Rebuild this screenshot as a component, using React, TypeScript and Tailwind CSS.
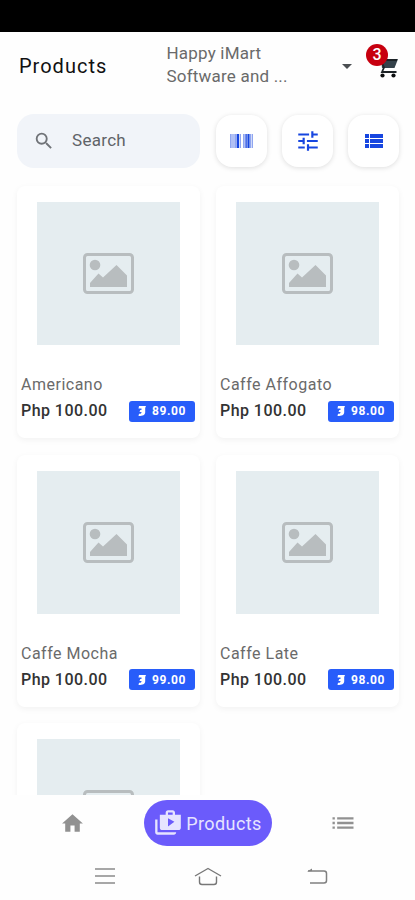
import { MdArrowDropDown, MdHome, MdList, MdSearch, MdShopTwo, MdTune } from "react-icons/md";

interface Product {
  id: number;
  name?: string;
  price?: string;
  points?: string;
}

const PRODUCTS: Product[] = [
  { id: 1, name: "Americano", price: "Php 100.00", points: "89.00" },
  { id: 2, name: "Caffe Affogato", price: "Php 100.00", points: "98.00" },
  { id: 3, name: "Caffe Mocha", price: "Php 100.00", points: "99.00" },
  { id: 4, name: "Caffe Late", price: "Php 100.00", points: "98.00" },
  { id: 5 },
];

const Cart = () => (
  <svg width="26" height="26" viewBox="0 0 26 26" fill="none">
    <path d="M8 6h17l-3.500 9H9z" fill="#34414a" />
    <path d="M3 5h4l4 9.500-2 4.500h14.500M9 7h15" stroke="#1c2226" strokeWidth="1.800" />
    <circle cx="9.500" cy="22.500" r="2.100" fill="#0d0f10" />
    <circle cx="20.500" cy="22.500" r="2.100" fill="#0d0f10" />
  </svg>
);

const Barcode = () => (
  <svg width="23" height="14" viewBox="0 0 23 14" fill="#1746e0">
    <path opacity=".2" d="M0 0h11v14H0zM13 0h10v14H13z" />
    <path opacity=".35" d="M0 0h1.500v14H0zM2.500 0h1v14h-1zM4.500 0h1.500v14H4.500zM10 0h1v14h-1zM13 0h1.500v14H13zM20 0h1v14h-1zM22 0h1v14h-1z" />
    <path d="M6.700 0H9v14H6.700zM15.500 0h1.200v14h-1.200zM17.500 0h2v14h-2z" />
  </svg>
);

const ListIcon = () => (
  <svg width="18" height="14" viewBox="0 0 18 14" fill="currentColor">
    <path d="M0 0h4v4H0zM5 0h13v4H5zM0 5h4v4H0zM5 5h13v4H5zM0 10h4v4H0zM5 10h13v4H5z" />
  </svg>
);

const Placeholder = () => (
  <div className="flex h-[143px] w-[143px] items-center justify-center bg-[#e5edf0]">
    <svg width="51" height="41" viewBox="0 0 51 41" fill="none">
      <rect x="1.500" y="1.500" width="48" height="38" rx="3" stroke="#b8bdbf" strokeWidth="3" />
      <circle cx="12" cy="12" r="5.300" fill="#b8bdbf" />
      <path d="M7 34v-4l8.500-9.500 4.500 4L33.500 12 44 22.500V34z" fill="#b8bdbf" />
    </svg>
  </div>
);

const PointsBadge = ({ value }: { value: string }) => (
  <div className="mr-px flex h-[21px] w-[66px] items-center justify-center gap-[6px] rounded-[3px] bg-[#285dfa] text-white">
    <svg width="8" height="10" viewBox="0 0 8 10" fill="currentColor">
      <path d="M1 0h7L7.200 2v4.500C7 9 5 10 .5 10L1 7.800C3 8 3.500 7.200 3.500 6H1.500L2.300 4H3.500V2.500H.5z" />
    </svg>
    <span className="text-[12px] font-bold tracking-[0.6px]">{value}</span>
  </div>
);

const ProductCard = ({ product }: { product: Product }) => (
  <div className="flex h-[252px] flex-col rounded-lg bg-white px-1 pt-4 shadow-[0_2px_6px_rgba(0,0,0,0.05)]">
    <div className="flex justify-center">
      <Placeholder />
    </div>
    {product.name && <p className="mt-7 text-[16px] leading-6 tracking-[0.5px] text-[#6a6a6a]">{product.name}</p>}
    {product.points && (
      <div className="flex items-center justify-between">
        <p className="text-[16px] font-medium leading-7 tracking-[0.45px] text-[#333]">{product.price}</p>
        <PointsBadge value={product.points} />
      </div>
    )}
  </div>
);

const ToolButton = ({ label, children }: { label: string; children: React.ReactNode }) => (
  <button aria-label={label} className="flex h-[52px] w-[51px] items-center justify-center rounded-2xl bg-white text-[#1746e0] shadow-[0_1px_5px_rgba(0,0,0,0.13)]">
    {children}
  </button>
);

export default function App() {
  return (
    <div className="flex h-[900px] w-full flex-col overflow-hidden bg-[#fefefe] font-['Roboto','Noto_Sans',sans-serif]">
      <div className="h-8 shrink-0 bg-black" />

      <header className="flex h-[67px] shrink-0 items-center pl-[19px] pr-4">
        <h1 className="w-[148px] text-[20px] tracking-[1px] text-[#111]">Products</h1>
        <p className="w-[169px] pb-px text-[17px] leading-[23px] tracking-[0.2px] text-[#6a6a6a]">Happy iMart<br />Software and ...</p>
        <MdArrowDropDown className="size-6 shrink-0 text-[#4b4f52]" />
        <div className="relative ml-[14px] shrink-0">
          <Cart />
          <span className="absolute -left-[7px] -top-[9px] flex size-[22px] items-center justify-center rounded-full bg-[#c7000f] text-[16px] font-medium text-white">3</span>
        </div>
      </header>

      <div className="flex shrink-0 items-center gap-[15px] pl-[17px] pr-4 pt-[15px]">
        <div className="mr-px flex h-[54px] w-[184px] items-center gap-[17px] rounded-[17px] bg-[#f1f4f9] pl-4">
          <MdSearch className="size-[22px] shrink-0 text-[#707378]" />
          <span className="pb-px text-[17px] tracking-[0.3px] text-[#606368]">Search</span>
        </div>
        <ToolButton label="Scan barcode"><Barcode /></ToolButton>
        <ToolButton label="Filters"><MdTune className="size-[26px]" /></ToolButton>
        <ToolButton label="List view"><ListIcon /></ToolButton>
      </div>

      <main className="min-h-0 flex-1 overflow-hidden px-[17px] pt-[18px]">
        <div className="grid grid-cols-[183px_183px] gap-x-4 gap-y-[16.500px]">
          {PRODUCTS.map(p => (
            <ProductCard key={p.id} product={p} />
          ))}
        </div>
      </main>

      <nav className="flex h-[57px] shrink-0 items-center justify-between pb-px pl-[60px] pr-[58px]">
        <MdHome className="size-[25px] text-[#919191]" />
        <div className="relative left-px flex h-[46px] w-[128px] items-center justify-center gap-1 rounded-full bg-[#6b5bfb] text-[#e6e4ff]">
          <MdShopTwo className="size-[28px]" />
          <span className="text-[18px] tracking-[0.4px]">Products</span>
        </div>
        <MdList className="size-[28px] text-[#919191]" />
      </nav>

      <div className="flex h-12 shrink-0 items-center justify-between pl-[95px] pr-[87px]">
        <svg width="20" height="18" viewBox="0 0 20 18" stroke="#8a8a8a" strokeWidth="1.500">
          <path d="M0 2h20M0 9h20M0 16h20" />
        </svg>
        <svg className="relative -left-[3px]" width="28" height="19" viewBox="0 0 28 19" fill="none" stroke="#777" strokeWidth="1.400" strokeLinejoin="round">
          <path d="M1 9 14 1.500 27 9M5.500 9.500V15q0 2.500 2.500 2.500h12q2.500 0 2.500-2.500V9.500" />
        </svg>
        <svg width="22" height="18" viewBox="0 0 22 18" fill="none" stroke="#808080" strokeWidth="1.500">
          <path d="M2 4h16q2.500 0 2.500 2.500v7q0 2.500-2.500 2.500H4" />
          <path d="M1 4.500 6 1.500V4z" fill="#808080" stroke="none" />
        </svg>
      </div>
    </div>
  );
}
